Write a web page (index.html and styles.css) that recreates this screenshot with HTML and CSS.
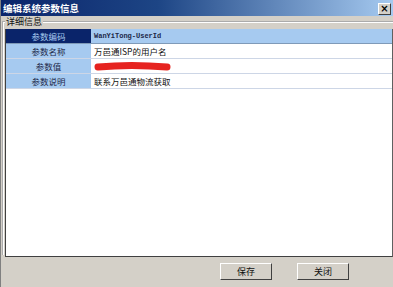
FILE: index.html
```html
<!DOCTYPE html>
<html lang="zh-CN">
<head>
    <meta charset="UTF-8">
    <title>编辑系统参数信息</title>
    <link rel="stylesheet" href="styles.css">
</head>
<body>
    <div class="window">
        <div class="titlebar">
            <span class="title">编辑系统参数信息</span>
            <span class="close-btn">×</span>
        </div>
        <fieldset class="group">
            <legend class="group-label">详细信息</legend>
            <div class="panel">
                <div class="row selected">
                    <div class="label">参数编码</div>
                    <div class="value mono">WanYiTong-UserId</div>
                </div>
                <div class="row">
                    <div class="label">参数名称</div>
                    <div class="value">万邑通ISP的用户名</div>
                </div>
                <div class="row">
                    <div class="label">参数值</div>
                    <div class="value">
                        <svg class="scribble" width="78" height="14" viewBox="0 0 78 14">
                            <path d="M4 8 C25 6, 50 6, 73 8" fill="none" stroke="#e6231f" stroke-width="7" stroke-linecap="round"/>
                        </svg>
                    </div>
                </div>
                <div class="row">
                    <div class="label">参数说明</div>
                    <div class="value">联系万邑通物流获取</div>
                </div>
            </div>
        </fieldset>
        <div class="footer">
            <button class="button">保存</button>
            <button class="button">关闭</button>
        </div>
    </div>
</body>
</html>
```

FILE: styles.css
```css
body {
    margin: 0;
    padding: 0;
    font-family: "Noto Sans CJK SC", "DejaVu Sans", sans-serif;
    font-size: 9px;
    color: #1a1a1a;
}
.window {
    width: 393px;
    height: 287px;
    box-sizing: border-box;
    background-color: #d4d0c8;
    border-left: 1px solid #808080;
    display: flex;
    flex-direction: column;
    overflow: hidden;
}
.titlebar {
    height: 16px;
    flex: none;
    display: flex;
    align-items: center;
    justify-content: space-between;
    padding: 0 2px 0 2px;
    background: linear-gradient(to right, #0a246a 0%, #1d4585 40%, #a6caf0 100%);
}
.title {
    color: #ffffff;
    font-weight: bold;
    font-size: 9.5px;
    line-height: 16px;
}
.close-btn {
    width: 11px;
    height: 10px;
    margin-top: 2px;
    background-color: #d4d0c8;
    border: 1px solid;
    border-color: #ffffff #404040 #404040 #ffffff;
    font-family: "DejaVu Sans", sans-serif;
    font-weight: bold;
    font-size: 10px;
    line-height: 9px;
    text-align: center;
    color: #000;
}
.group {
    margin: 0 0 0 1px;
    padding: 1px 0 0 0;
    border: none;
    border-top: 2px groove #ffffff;
    border-left: 2px groove #ffffff;
    flex: none;
    height: 239px;
    box-sizing: border-box;
}
.group-label {
    padding: 0 1px;
    margin-left: 1px;
    font-size: 9px;
    line-height: 12px;
    color: #101010;
}
.panel {
    height: 228px;
    margin-left: 1px;
    box-sizing: border-box;
    background-color: #ffffff;
    border-left: 1px solid #404040;
    border-bottom: 1px solid #404040;
    border-right: 1px solid #606060;
}
.row {
    display: grid;
    grid-template-columns: 85px 1fr;
    height: 15px;
    box-sizing: border-box;
    border-bottom: 1px solid #cdd6e6;
}
.label {
    background-color: #a6caf0;
    color: #1c2848;
    text-align: center;
    line-height: 14px;
    font-size: 8.5px;
}
.value {
    padding-left: 3px;
    line-height: 14px;
    font-size: 8.5px;
    color: #101010;
    display: flex;
    align-items: center;
}
.mono {
    font-family: "Liberation Mono", monospace;
    font-size: 7px;
    font-weight: bold;
    color: #1c2848;
}
.selected {
    border-bottom: 1px solid #7f9ab8;
}
.selected .label {
    background-color: #0a246a;
    color: #a6caf0;
}
.selected .value {
    background-color: #a6caf0;
}
.scribble {
    display: block;
}
.footer {
    flex: 1;
    display: flex;
    justify-content: flex-end;
    align-items: center;
    gap: 25px;
    padding-right: 44px;
}
.button {
    width: 52px;
    height: 17px;
    padding: 0;
    background-color: #d4d0c8;
    border: 1px solid;
    border-color: #ffffff #404040 #404040 #ffffff;
    font-family: "Noto Sans CJK SC", sans-serif;
    font-size: 9px;
    color: #101010;
}
```
